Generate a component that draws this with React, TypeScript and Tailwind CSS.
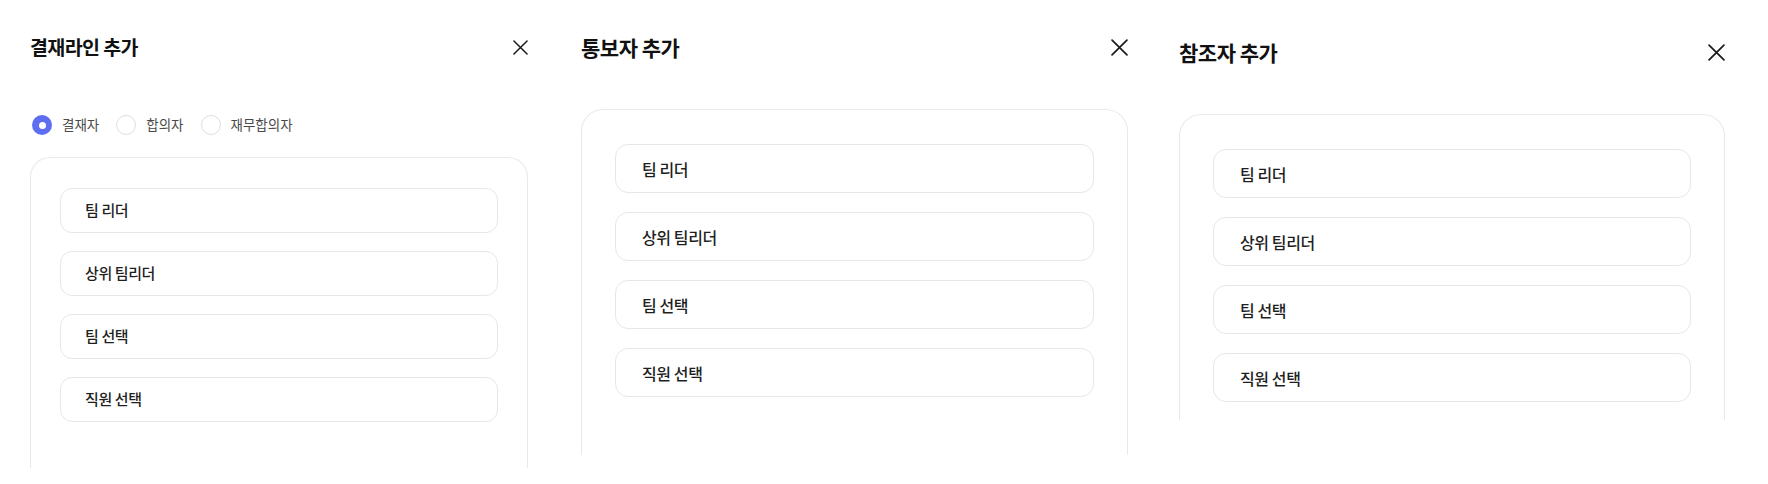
import React from 'react';

type Size = 'sm' | 'lg';

interface Option {
  label: string;
  checked?: boolean;
}

interface Props {
  title: string;
  size: Size;
  wrapClass: string;
  headerClass: string;
  cardClass: string;
  options?: Option[];
}

const items = ['팀 리더', '상위 팀리더', '팀 선택', '직원 선택'];

const styles = {
  sm: {
    header: 'h-[28px]',
    title: 'text-[19.5px] tracking-[-0.6px]',
    close: 'w-[15px] h-[15px]',
    card: 'rounded-t-[20px] px-[29px] pt-[30px]',
    list: 'gap-[18px]',
    item: 'h-[45px] rounded-[12px] pl-[24px] text-[15px] tracking-[-0.4px]',
  },
  lg: {
    header: 'h-[30px]',
    title: 'text-[21px] tracking-[-0.5px]',
    close: 'w-[17px] h-[17px]',
    card: 'rounded-t-[22px] px-[33px] pt-[34px]',
    list: 'gap-[19px]',
    item: 'h-[49px] rounded-[13px] pl-[26px] text-[16px] tracking-[-0.4px]',
  },
};

function CloseIcon({ className }: { className: string }) {
  return (
    <svg viewBox="0 0 16 16" className={className} fill="none" stroke="#1a1a1a" strokeWidth={1.6} strokeLinecap="round">
      <path d="M1 1L15 15M15 1L1 15" />
    </svg>
  );
}

function Radio({ label, checked }: Option) {
  return (
    <label className="flex items-center gap-[10px]">
      {checked ? (
        <span className="w-[20px] h-[20px] rounded-full bg-[#5d6ef0] flex items-center justify-center">
          <span className="w-[7px] h-[7px] rounded-full bg-white" />
        </span>
      ) : (
        <span className="w-[20px] h-[20px] rounded-full border-[1.5px] border-[#dedede] bg-white" />
      )}
      <span className="text-[13.5px] text-[#4a4a4a] leading-none">{label}</span>
    </label>
  );
}

function Modal({ title, size, wrapClass, headerClass, cardClass, options }: Props) {
  const s = styles[size];
  return (
    <div className={`flex flex-col bg-white ${wrapClass}`}>
      <div className={`flex items-center justify-between ${s.header} ${headerClass}`}>
        <h2 className={`font-bold text-[#111] leading-none ${s.title}`}>{title}</h2>
        <CloseIcon className={s.close} />
      </div>

      {options && (
        <div className="flex items-center gap-[17px] h-[20px] mt-[54px] pl-[2px]">
          {options.map((o) => (
            <Radio key={o.label} label={o.label} checked={o.checked} />
          ))}
        </div>
      )}

      <div className={`border-x border-t border-[#e9e9e9] ${s.card} ${cardClass}`}>
        <div className={`flex flex-col ${s.list}`}>
          {items.map((it) => (
            <div key={it} className={`flex items-center border border-[#e7e7e7] bg-white font-medium text-[#1f1f1f] ${s.item}`}>
              {it}
            </div>
          ))}
        </div>
      </div>
    </div>
  );
}

export default function App() {
  return (
    <div className="w-[1768px] h-[484px] bg-white flex overflow-hidden" style={{ fontFamily: '"Noto Sans CJK KR", "Noto Sans", sans-serif' }}>
      <Modal
        title="결재라인 추가"
        size="sm"
        wrapClass="w-[556px] pl-[30px] pr-[28px]"
        headerClass="mt-[33px]"
        cardClass="mt-[22px] h-[311px]"
        options={[{ label: '결재자', checked: true }, { label: '합의자' }, { label: '재무합의자' }]}
      />
      <Modal
        title="통보자 추가"
        size="lg"
        wrapClass="w-[596px] pl-[25px] pr-[24px]"
        headerClass="mt-[32px]"
        cardClass="mt-[47px] h-[346px]"
      />
      <Modal
        title="참조자 추가"
        size="lg"
        wrapClass="w-[616px] pl-[27px] pr-[43px]"
        headerClass="mt-[37px]"
        cardClass="mt-[47px] h-[306px]"
      />
    </div>
  );
}
